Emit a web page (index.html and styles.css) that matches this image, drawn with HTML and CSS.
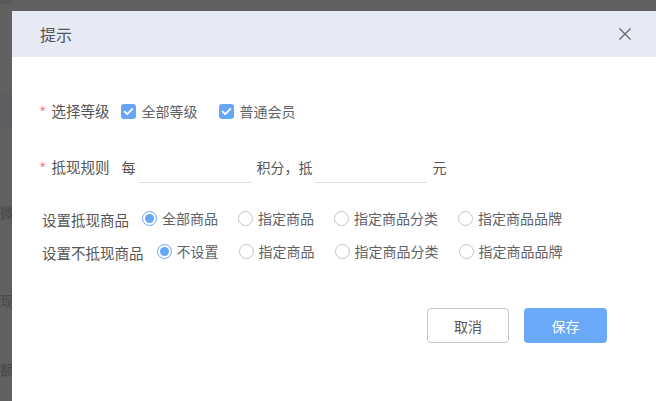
FILE: index.html
```html
<!DOCTYPE html>
<html lang="zh">
<head>
<meta charset="utf-8">
<title>提示</title>
<link rel="stylesheet" href="styles.css">
</head>
<body>
<div class="page">
  <div class="bg-top"></div>
  <div class="bg-band"></div>
  <div class="bg-t t1">微</div>
  <div class="bg-t t2">现</div>
  <div class="bg-t t3">额</div>
</div>
<div class="dialog">
  <div class="dlg-head">
    <span class="title">提示</span>
    <svg class="close" width="12" height="12" viewBox="0 0 12 12"><path d="M0.5 0.5L11.5 11.5M11.5 0.5L0.5 11.5" stroke="#666" stroke-width="1.3" fill="none"/></svg>
  </div>
  <div class="dlg-body">
    <div class="row r1">
      <span class="req">*</span><span class="label">选择等级</span>
      <span class="cb"><span class="box"><svg width="15" height="15" viewBox="0 0 15 15"><path d="M3.6 7.6L6.3 10.2L11.4 4.8" stroke="#fff" stroke-width="1.8" fill="none" stroke-linecap="round" stroke-linejoin="round"/></svg></span>全部等级</span>
      <span class="cb"><span class="box"><svg width="15" height="15" viewBox="0 0 15 15"><path d="M3.6 7.6L6.3 10.2L11.4 4.8" stroke="#fff" stroke-width="1.8" fill="none" stroke-linecap="round" stroke-linejoin="round"/></svg></span>普通会员</span>
    </div>
    <div class="row r2">
      <span class="req">*</span><span class="label">抵现规则</span>
      <span class="txt">每</span><span class="inp i1"></span><span class="txt">积分，抵</span><span class="inp i2"></span><span class="txt">元</span>
    </div>
    <div class="row r3">
      <span class="label lbl2">设置抵现商品</span>
      <span class="rd"><span class="radio on"><span class="dot"></span></span>全部商品</span>
      <span class="rd"><span class="radio"></span>指定商品</span>
      <span class="rd"><span class="radio"></span>指定商品分类</span>
      <span class="rd"><span class="radio"></span>指定商品品牌</span>
    </div>
    <div class="row r4">
      <span class="label lbl2">设置不抵现商品</span>
      <span class="rd"><span class="radio on"><span class="dot"></span></span>不设置</span>
      <span class="rd"><span class="radio"></span>指定商品</span>
      <span class="rd"><span class="radio"></span>指定商品分类</span>
      <span class="rd"><span class="radio"></span>指定商品品牌</span>
    </div>
  </div>
  <div class="footer">
    <span class="btn cancel">取消</span>
    <span class="btn save">保存</span>
  </div>
</div>
</body>
</html>
```
FILE: styles.css
```css
html, body {
  margin: 0;
  padding: 0;
}
body {
  width: 656px;
  height: 401px;
  overflow: hidden;
  position: relative;
  background: #606060;
  font-family: "Noto Sans CJK SC", "Liberation Sans", sans-serif;
}
.page {
  width: 12px;
}
.bg-top {
  height: 4px;
  background: #5a5a5a;
}
.bg-band {
  margin-top: 89px;
  height: 35px;
  background: #5c5e63;
}
.bg-t {
  font-size: 14px;
  line-height: 20px;
  color: #474747;
  white-space: nowrap;
}
.t1 { margin-top: 74px; }
.t2 { margin-top: 68px; }
.t3 { margin-top: 49px; }

.dialog {
  position: absolute;
  top: 11px;
  left: 12px;
  width: 660px;
  height: 400px;
  background: #fff;
}
.dlg-head {
  height: 46px;
  box-sizing: border-box;
  background: #e6eaf5;
  display: flex;
  align-items: center;
  justify-content: space-between;
  padding: 0 41px 0 28px;
}
.title {
  font-size: 16px;
  line-height: 20px;
  color: #555;
}
.close {
  display: block;
}
.dlg-body {
  padding-top: 44px;
}
.row {
  display: flex;
  align-items: center;
  height: 20px;
  font-size: 14px;
  line-height: 20px;
  color: #606266;
  white-space: nowrap;
}
.r1 { padding-left: 28px; }
.r2 { padding-left: 28px; height: 32px; margin-top: 30px; }
.r3 { padding-left: 30px; margin-top: 25px; }
.r4 { padding-left: 30px; margin-top: 13px; }
.req {
  font-family: "Liberation Sans", sans-serif;
  color: #f56c6c;
  margin-right: 6px;
}
.label {
  font-size: 14.5px;
  color: #555;
  margin-right: 12px;
}
.lbl2 {
  margin-right: 13px;
  padding-top: 4px;
}
.cb {
  display: flex;
  align-items: center;
  margin-right: 22px;
}
.box {
  width: 15px;
  height: 15px;
  border-radius: 3px;
  background: #66a6f6;
  margin-right: 5px;
  display: flex;
}
.box svg { display: block; }
.txt { color: #555; }
.inp {
  height: 32px;
  box-sizing: border-box;
  border-bottom: 1px solid #dcdfe6;
}
.i1 { width: 113px; margin: 0 4px 0 4px; }
.i2 { width: 112px; margin: 0 5px 0 3px; }
.rd {
  display: flex;
  align-items: center;
  margin-right: 20px;
}
.radio {
  width: 15px;
  height: 15px;
  box-sizing: border-box;
  border-radius: 50%;
  border: 1px solid #c0c4cc;
  margin-right: 5px;
  display: flex;
  align-items: center;
  justify-content: center;
}
.radio.on {
  border-color: #66a6f6;
}
.dot {
  width: 9px;
  height: 9px;
  border-radius: 50%;
  background: #66a6f6;
}
.footer {
  display: flex;
  justify-content: flex-end;
  gap: 15px;
  padding-right: 65px;
  margin-top: 47px;
}
.btn {
  height: 35px;
  box-sizing: border-box;
  border-radius: 4px;
  display: flex;
  align-items: center;
  justify-content: center;
  font-size: 14px;
}
.cancel {
  width: 82px;
  border: 1px solid #c6c6c6;
  color: #555;
}
.save {
  width: 83px;
  background: #69a9f7;
  color: #fff;
}
```
